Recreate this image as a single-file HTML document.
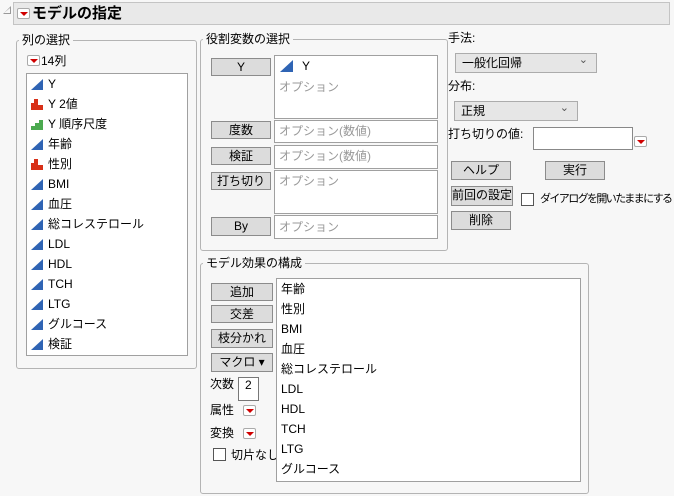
<!DOCTYPE html>
<html><head><meta charset="utf-8"><style>
*{box-sizing:border-box;margin:0;padding:0}
body{width:674px;height:496px;background:#f7f7f7;position:relative;overflow:hidden;font-family:"Liberation Sans","Noto Sans CJK JP",sans-serif;font-size:12px;color:#000}
.a{position:absolute;white-space:nowrap;line-height:14px}
.grp{position:absolute;border:1px solid #b4b4b4;border-radius:3px}
.lbl{position:absolute;background:#f7f7f7;padding:0 3px;line-height:14px}
.box{position:absolute;background:#fff;border:1px solid #a0a0a0}
.btn{position:absolute;background:#dcdcdc;border:1px solid #8c8c8c;text-align:center;line-height:16px}
.rb{position:absolute;width:13px;height:11px;border:1px solid #aaa;border-radius:2px;background:#fff}
.rb:after{content:"";position:absolute;left:2px;top:3px;border-left:4px solid transparent;border-right:4px solid transparent;border-top:4px solid #d00000}
.cb{position:absolute;width:13px;height:13px;border:1px solid #555;background:#fff}
.gr{color:#999}
.dd{position:absolute;background:#e6e6e6;border:1px solid #acacac;line-height:18px;padding-left:6px}
.dd:after{content:"⌄";position:absolute;right:8px;top:-3px;font-size:11px;color:#555}
</style></head><body>
<div class="a" style="left:3px;top:6px;width:0;height:0;border-left:8px solid transparent;border-bottom:8px solid #999"></div>
<div class="a" style="left:4px;top:8px;width:0;height:0;border-left:6px solid transparent;border-bottom:5px solid #f7f7f7"></div>
<div style="position:absolute;left:13px;top:2px;width:657px;height:23px;background:#e9e9e9;border:1px solid #c4c4c4"></div>
<div class="rb" style="left:17px;top:8px"></div>
<div class="a" style="left:32px;top:6px;font-size:15px;font-weight:bold;line-height:16px">モデルの指定</div>

<div class="grp" style="left:16px;top:40px;width:181px;height:329px"></div>
<div class="lbl" style="left:19px;top:33px">列の選択</div>
<div class="rb" style="left:27px;top:55px"></div>
<div class="a" style="left:41px;top:54px">14列</div>
<div class="box" style="left:26px;top:73px;width:162px;height:283px"></div>
<svg style="position:absolute;left:30px;top:77px" width="16" height="280">
<defs><g id="t"><polygon points="1,12 13,1 13,12" fill="#2f64b4"/></g>
<g id="r"><rect x="1" y="5" width="3" height="7" fill="#d83018"/><rect x="4" y="1" width="4" height="11" fill="#d83018"/><rect x="8" y="7" width="5" height="5" fill="#d83018"/></g>
<g id="g"><rect x="1" y="8" width="4" height="4" fill="#4caa50"/><rect x="5" y="5" width="4" height="7" fill="#4caa50"/><rect x="9" y="2" width="4" height="10" fill="#4caa50"/></g></defs>
<use href="#t" y="1"/><use href="#r" y="21"/><use href="#g" y="41"/><use href="#t" y="61"/><use href="#r" y="81"/>
<use href="#t" y="101"/><use href="#t" y="121"/><use href="#t" y="141"/><use href="#t" y="161"/><use href="#t" y="181"/><use href="#t" y="201"/><use href="#t" y="221"/><use href="#t" y="241"/><use href="#t" y="261"/>
</svg>
<div class="a" style="left:48px;top:74px;line-height:20px">Y<br>Y 2値<br>Y 順序尺度<br>年齢<br>性別<br>BMI<br>血圧<br>総コレステロール<br>LDL<br>HDL<br>TCH<br>LTG<br>グルコース<br>検証</div>

<div class="grp" style="left:200px;top:39px;width:248px;height:212px"></div>
<div class="lbl" style="left:203px;top:32px">役割変数の選択</div>
<div class="btn" style="left:211px;top:58px;width:60px;height:18px">Y</div>
<div class="box" style="left:274px;top:55px;width:164px;height:64px"></div>
<svg style="position:absolute;left:279px;top:59px" width="16" height="14"><polygon points="1,13 14,1 14,13" fill="#2f64b4"/></svg>
<div class="a" style="left:302px;top:59px">Y</div>
<div class="a gr" style="left:279px;top:80px">オプション</div>
<div class="btn" style="left:211px;top:121px;width:60px;height:18px">度数</div>
<div class="box" style="left:274px;top:120px;width:164px;height:23px"></div>
<div class="a gr" style="left:279px;top:124px">オプション(数値)</div>
<div class="btn" style="left:211px;top:147px;width:60px;height:18px">検証</div>
<div class="box" style="left:274px;top:145px;width:164px;height:24px"></div>
<div class="a gr" style="left:279px;top:149px">オプション(数値)</div>
<div class="btn" style="left:211px;top:172px;width:60px;height:18px">打ち切り</div>
<div class="box" style="left:274px;top:170px;width:164px;height:44px"></div>
<div class="a gr" style="left:279px;top:174px">オプション</div>
<div class="btn" style="left:211px;top:217px;width:60px;height:19px">By</div>
<div class="box" style="left:274px;top:215px;width:164px;height:24px"></div>
<div class="a gr" style="left:279px;top:220px">オプション</div>

<div class="a" style="left:448px;top:31px">手法:</div>
<div class="dd" style="left:455px;top:53px;width:142px;height:20px">一般化回帰</div>
<div class="a" style="left:448px;top:79px">分布:</div>
<div class="dd" style="left:454px;top:101px;width:124px;height:20px">正規</div>
<div class="a" style="left:448px;top:127px">打ち切りの値:</div>
<div class="box" style="left:533px;top:127px;width:100px;height:23px;border-color:#888"></div>
<div class="rb" style="left:634px;top:136px"></div>
<div class="btn" style="left:451px;top:161px;width:60px;height:19px">ヘルプ</div>
<div class="btn" style="left:545px;top:161px;width:60px;height:19px">実行</div>
<div class="btn" style="left:451px;top:186px;width:62px;height:20px">前回の設定</div>
<div class="cb" style="left:521px;top:193px"></div>
<div class="a" style="left:540px;top:192px;font-size:11px;letter-spacing:-1.6px">ダイアログを開いたままにする</div>
<div class="btn" style="left:451px;top:211px;width:60px;height:19px">削除</div>

<div class="grp" style="left:200px;top:263px;width:389px;height:231px"></div>
<div class="lbl" style="left:203px;top:256px">モデル効果の構成</div>
<div class="btn" style="left:211px;top:283px;width:62px;height:18px">追加</div>
<div class="btn" style="left:211px;top:305px;width:62px;height:18px">交差</div>
<div class="btn" style="left:211px;top:329px;width:62px;height:19px">枝分かれ</div>
<div class="btn" style="left:211px;top:353px;width:62px;height:19px">マクロ ▾</div>
<div class="a" style="left:210px;top:377px">次数</div>
<div class="box" style="left:238px;top:377px;width:21px;height:24px;border-color:#777"></div>
<div class="a" style="left:245px;top:378px">2</div>
<div class="a" style="left:210px;top:403px">属性</div>
<div class="rb" style="left:243px;top:405px"></div>
<div class="a" style="left:210px;top:426px">変換</div>
<div class="rb" style="left:243px;top:428px"></div>
<div class="cb" style="left:213px;top:448px"></div>
<div class="a" style="left:231px;top:448px">切片なし</div>
<div class="box" style="left:276px;top:278px;width:305px;height:204px"></div>
<div class="a" style="left:281px;top:279px;line-height:20px">年齢<br>性別<br>BMI<br>血圧<br>総コレステロール<br>LDL<br>HDL<br>TCH<br>LTG<br>グルコース</div>
</body></html>
